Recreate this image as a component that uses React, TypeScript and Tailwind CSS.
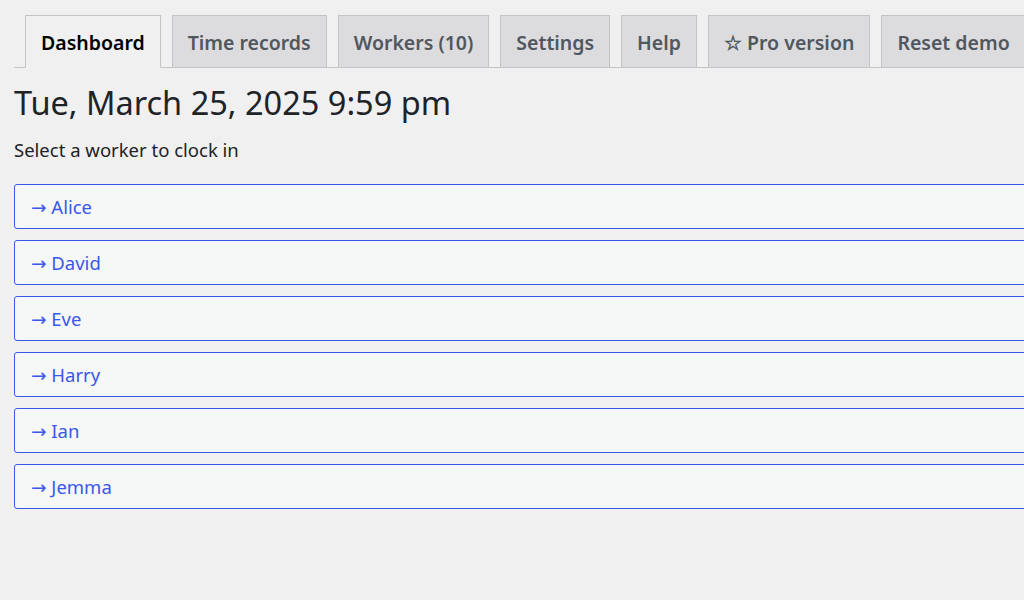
const tabs = [
  { label: "Dashboard", active: true },
  { label: "Time records" },
  { label: "Workers (10)" },
  { label: "Settings" },
  { label: "Help" },
  { label: "☆ Pro version" },
  { label: "Reset demo" },
];

const workers = ["Alice", "David", "Eve", "Harry", "Ian", "Jemma"];

function App() {
  return (
    <div
      className="w-[1024px] h-[600px] overflow-hidden bg-[#f0f0f1] text-[#1d2327]"
      style={{ fontFamily: '"Noto Sans", "Liberation Sans", sans-serif' }}
    >
      <div className="w-[1060px] pl-[14px] pt-[15px]">
        <nav className="flex gap-[11px] pl-[11px] border-b border-[#c3c4c7] h-[53px]">
          {tabs.map((tab) => (
            <div
              key={tab.label}
              className={`shrink-0 h-[53px] px-[15px] pt-[2px] border border-[#c3c4c7] flex items-center text-[19.5px] font-semibold whitespace-nowrap ${
                tab.active
                  ? "bg-[#f0f0f1] text-black border-b-[#f0f0f1]"
                  : "bg-[#dcdcde] text-[#50575e]"
              }`}
            >
              {tab.label}
            </div>
          ))}
        </nav>
        <h1 className="text-[32.5px] leading-[40px] mt-[15px] font-normal">
          Tue, March 25, 2025 9:59 pm
        </h1>
        <p className="text-[18.5px] leading-[24px] mt-[15px]">
          Select a worker to clock in
        </p>
        <div className="flex flex-col gap-[11px] mt-[22px]">
          {workers.map((name) => (
            <button
              key={name}
              className="w-full h-[45px] text-left px-[16px] pt-[2px] border border-[#3858e9] rounded-[3px] bg-[#f6f7f7] text-[#3858e9] text-[18.5px]"
            >
              <span style={{ fontFamily: '"DejaVu Sans", sans-serif' }}>→</span> {name}
            </button>
          ))}
        </div>
      </div>
    </div>
  );
}

export default App;
